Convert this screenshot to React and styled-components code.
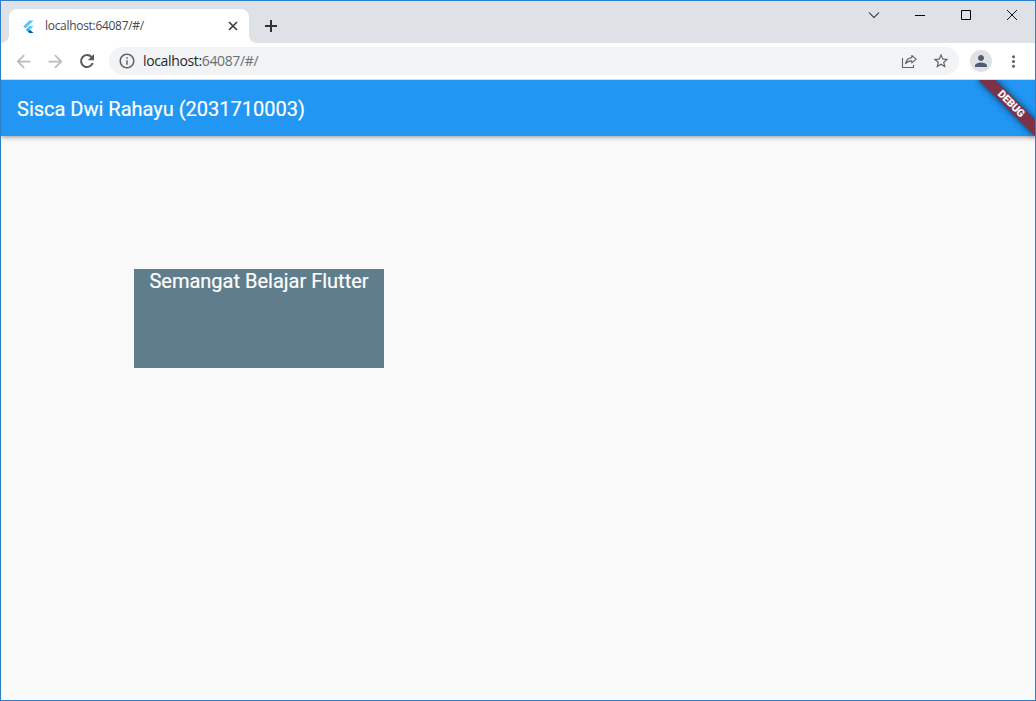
import React from "react";
import styled, { createGlobalStyle } from "styled-components";

const Global = createGlobalStyle`
  * { box-sizing: border-box; }
  body { margin: 0; }
`;

const Window = styled.div`
  width: 1036px;
  height: 701px;
  border: 1px solid #2b80c8;
  display: flex;
  flex-direction: column;
  overflow: hidden;
  background: #fafafa;
`;

const TabStrip = styled.div`
  height: 42px;
  flex: none;
  display: flex;
  align-items: flex-start;
  background: #dee1e6;
`;

const Tab = styled.div`
  width: 240px;
  height: 34px;
  margin: 8px 0 0 8px;
  padding: 0 10px 0 14px;
  display: flex;
  align-items: center;
  background: #fff;
  border-radius: 8px 8px 0 0;
  position: relative;
  &::before,
  &::after {
    content: "";
    position: absolute;
    bottom: 0;
    width: 8px;
    height: 8px;
  }
  &::before {
    left: -8px;
    background: radial-gradient(circle at 0 0, #dee1e6 7.5px, #fff 8.5px);
  }
  &::after {
    right: -8px;
    background: radial-gradient(circle at 100% 0, #dee1e6 7.5px, #fff 8.5px);
  }
`;

const TabTitle = styled.span`
  flex: 1;
  margin-left: 11px;
  font: 12px/16px "Open Sans", sans-serif;
  letter-spacing: -0.3px;
  color: #45494d;
`;

const NewTab = styled.div`
  width: 28px;
  height: 28px;
  margin: 11px 0 0 8px;
  display: grid;
  place-items: center;
`;

const WindowControls = styled.div`
  display: flex;
  margin-left: auto;
  height: 28px;
`;

const ControlButton = styled.div`
  width: 46px;
  display: grid;
  place-items: center;
`;

const Toolbar = styled.div`
  height: 36px;
  flex: none;
  display: flex;
  align-items: center;
  padding: 0 6px;
  background: #fff;
`;

const NavButton = styled.div`
  width: 32px;
  height: 28px;
  display: grid;
  place-items: center;
`;

const AddressBar = styled.div`
  flex: 1;
  height: 28px;
  margin-left: 6px;
  padding: 0 2px 0 9px;
  border-radius: 14px;
  background: #f1f3f4;
  display: flex;
  align-items: center;
`;

const Url = styled.span`
  flex: 1;
  margin-left: 7px;
  font: 14px/20px "Open Sans", sans-serif;
  letter-spacing: -0.36px;
  color: #6b6f74;
`;

const Host = styled.span`
  color: #26282c;
`;

const Avatar = styled.div`
  width: 22px;
  height: 22px;
  margin: 0 5px 0 11px;
  border-radius: 50%;
  background: #dee1e6;
  display: grid;
  place-items: center;
`;

const Page = styled.main`
  flex: 1;
  border-top: 1px solid #c5dff5;
  position: relative;
  overflow: hidden;
  font-family: Roboto, sans-serif;
  font-size: 20px;
  color: #fff;
  -webkit-text-stroke: 0.2px #fff;
`;

const AppBar = styled.header`
  height: 56px;
  padding: 1px 16px 0;
  display: flex;
  align-items: center;
  background: #2196f3;
  box-shadow: 0 1px 5px rgba(0, 0, 0, 0.42);
`;

const AppTitle = styled.h1`
  margin: 0;
  font-size: 20px;
  font-weight: 400;
  line-height: 24px;
`;

const MessageBox = styled.div`
  width: 250px;
  height: 99px;
  margin: 133px 0 0 133px;
  background: #607d8b;
  text-align: center;
  line-height: 24px;
`;

const BannerClip = styled.div`
  position: absolute;
  top: 0;
  right: 0;
  width: 80px;
  height: 80px;
  overflow: hidden;
`;

const Banner = styled.div`
  position: absolute;
  left: 16px;
  top: 18px;
  width: 80px;
  height: 12px;
  transform: rotate(45deg);
  background: #7c3349;
  box-shadow: 0 0 7px rgba(0, 0, 0, 0.6);
  font-size: 10.4px;
  line-height: 12px;
  font-weight: 700;
  text-align: center;
`;

const Glyph = ({ size = 20, color = "#5f6368", d }) => (
  <svg width={size} height={size} viewBox="0 0 24 24" fill={color}>
    <path d={d} />
  </svg>
);

const FlutterLogo = () => (
  <svg width="11" height="13" viewBox="0 0 24 28">
    <path fill="#54c5f8" d="M14 1h9L5 18.500l-4.500-4.500z" />
    <path fill="#54c5f8" d="M14 13h9l-8 8-4.500-4.500z" />
    <path fill="#29b6f6" d="M6 21l4.500-4.500L15 21l-4.500 4.500z" />
    <path fill="#01579b" d="M10.500 25.500L15 21l8 7h-9z" />
  </svg>
);

export default function App() {
  return (
    <>
      <Global />
      <Window>
        <TabStrip>
          <Tab>
            <FlutterLogo />
            <TabTitle>localhost:64087/#/</TabTitle>
            <svg width="12" height="12" viewBox="0 0 12 12" stroke="#3c4043" strokeWidth="1.7">
              <path d="M2 2l8 8M10 2l-8 8" />
            </svg>
          </Tab>
          <NewTab>
            <svg width="14" height="14" viewBox="0 0 14 14" stroke="#303336" strokeWidth="2">
              <path d="M7 1v12M1 7h12" />
            </svg>
          </NewTab>
          <WindowControls>
            <ControlButton>
              <svg width="12" height="12" viewBox="0 0 12 12" fill="none" stroke="#222" strokeWidth="1.05">
                <path d="M1 3.500l5 5 5-5" />
              </svg>
            </ControlButton>
            <ControlButton>
              <svg width="10" height="10" viewBox="0 0 10 10" stroke="#000">
                <path d="M0 5.500h10" />
              </svg>
            </ControlButton>
            <ControlButton>
              <svg width="10" height="10" viewBox="0 0 10 10" fill="none" stroke="#000">
                <path d="M.5.5h9v9h-9z" />
              </svg>
            </ControlButton>
            <ControlButton>
              <svg width="10" height="10" viewBox="0 0 10 10" stroke="#111">
                <path d="M0 0l10 10M10 0L0 10" />
              </svg>
            </ControlButton>
          </WindowControls>
        </TabStrip>
        <Toolbar>
          <NavButton>
            <Glyph size={21} color="#babcbe" d="M20 11H7.830l5.590-5.590L12 4l-8 8 8 8 1.410-1.410L7.830 13H20v-2z" />
          </NavButton>
          <NavButton>
            <Glyph size={21} color="#babcbe" d="M12 4l-1.410 1.410L16.170 11H4v2h12.170l-5.580 5.590L12 20l8-8z" />
          </NavButton>
          <NavButton>
            <svg width="16" height="16" viewBox="0 0 16 16" fill="none" stroke="#55595e" strokeWidth="2">
              <path d="M13.700 10A6 6 0 1 1 12.500 4" />
              <path d="M15 1v6.200H8.800z" fill="#55595e" stroke="none" />
            </svg>
          </NavButton>
          <AddressBar>
            <Glyph
              size={18}
              d="M11 17h2v-6h-2v6zm1-15C6.480 2 2 6.480 2 12s4.480 10 10 10 10-4.480 10-10S17.520 2 12 2zm0 18c-4.410 0-8-3.590-8-8s3.590-8 8-8 8 3.590 8 8-3.590 8-8 8zM11 9h2V7h-2v2z"
            />
            <Url>
              <Host>localhost:</Host>64087/#/
            </Url>
            <NavButton>
              <svg width="16" height="16" viewBox="0 0 16 16" fill="none" stroke="#5f6368" strokeWidth="1.100">
                <path d="M1.500 5v9.500h11v-2.500" />
                <path d="M10.800 2.500l4.400 3.700-4.400 3.700V7.900C7.800 7.900 5.900 8.800 4.500 10.700 5 7.500 7.100 5 10.800 4.600z" strokeLinejoin="round" />
              </svg>
            </NavButton>
            <NavButton>
              <Glyph
                size={18}
                d="M22 9.240l-7.190-.62L12 2 9.190 8.630 2 9.240l5.460 4.730L5.820 21 12 17.270 18.180 21l-1.630-7.030L22 9.240zM12 15.400l-3.760 2.270 1-4.280-3.320-2.880 4.380-.38L12 6.100l1.710 4.040 4.380.38-3.320 2.880 1 4.280L12 15.400z"
              />
            </NavButton>
          </AddressBar>
          <Avatar>
            <Glyph
              size={18}
              color="#4f5b70"
              d="M12 12c2.210 0 4-1.790 4-4s-1.790-4-4-4-4 1.790-4 4 1.790 4 4 4zm0 2c-2.670 0-8 1.340-8 4v2h16v-2c0-2.660-5.330-4-8-4z"
            />
          </Avatar>
          <NavButton>
            <Glyph
              size={19}
              d="M12 8c1.100 0 2-.9 2-2s-.9-2-2-2-2 .9-2 2 .9 2 2 2zm0 2c-1.100 0-2 .9-2 2s.9 2 2 2 2-.9 2-2-.9-2-2-2zm0 6c-1.100 0-2 .9-2 2s.9 2 2 2 2-.9 2-2-.9-2-2-2z"
            />
          </NavButton>
        </Toolbar>
        <Page>
          <AppBar>
            <AppTitle>Sisca Dwi Rahayu (2031710003)</AppTitle>
          </AppBar>
          <MessageBox>Semangat Belajar Flutter</MessageBox>
          <BannerClip>
            <Banner>DEBUG</Banner>
          </BannerClip>
        </Page>
      </Window>
    </>
  );
}
